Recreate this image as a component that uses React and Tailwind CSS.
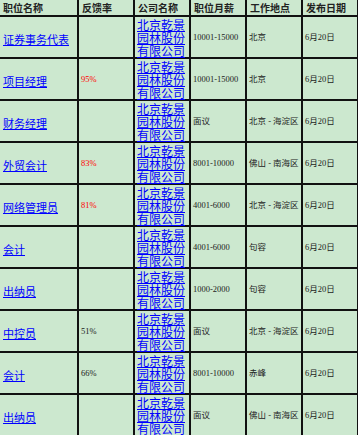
import React from 'react';

const COMPANY = '北京乾景园林股份有限公司';

const JOBS = [
  { title: '证券事务代表', rate: '', hot: false, pay: '10001-15000', place: '北京' },
  { title: '项目经理', rate: '95%', hot: true, pay: '10001-15000', place: '北京' },
  { title: '财务经理', rate: '', hot: false, pay: '面议', place: '北京 - 海淀区' },
  { title: '外贸会计', rate: '83%', hot: true, pay: '8001-10000', place: '佛山 - 南海区' },
  { title: '网络管理员', rate: '81%', hot: true, pay: '4001-6000', place: '北京 - 海淀区' },
  { title: '会计', rate: '', hot: false, pay: '4001-6000', place: '句容' },
  { title: '出纳员', rate: '', hot: false, pay: '1000-2000', place: '句容' },
  { title: '中控员', rate: '51%', hot: false, pay: '面议', place: '北京 - 海淀区' },
  { title: '会计', rate: '66%', hot: false, pay: '8001-10000', place: '赤峰' },
  { title: '出纳员', rate: '', hot: false, pay: '面议', place: '佛山 - 南海区' },
];

const HEADERS = ['职位名称', '反馈率', '公司名称', '职位月薪', '工作地点', '发布日期'];

const cell = 'border-r-2 border-b-2 border-[#111] p-0 align-middle';
const small = "text-[8.5px] leading-[10px] font-['Liberation_Serif','Noto_Sans_CJK_SC',serif] whitespace-nowrap text-[#222]";

export default function App() {
  return (
    <div className="w-[358px] h-[435px] overflow-hidden bg-[#cce8cf] font-['Noto_Sans_CJK_SC','Liberation_Sans',sans-serif] text-[#333]">
      <table className="border-collapse table-fixed w-[358px]">
        <colgroup>
          <col className="w-[78px]" />
          <col className="w-[56px]" />
          <col className="w-[56px]" />
          <col className="w-[56px]" />
          <col className="w-[56px]" />
          <col className="w-[56px]" />
        </colgroup>
        <thead>
          <tr className="h-[16px]">
            {HEADERS.map((h) => (
              <th key={h} className={`${cell} text-left font-bold text-[10px] leading-[14px] pl-[3px] text-[#222]`}>
                {h}
              </th>
            ))}
          </tr>
        </thead>
        <tbody>
          {JOBS.map((j, i) => (
            <tr key={i} className="h-[42px]">
              <td className={`${cell} pl-[3px]`}>
                <a href="#" className="text-[11px] leading-[14px] text-[#0000ff] underline">
                  {j.title}
                </a>
              </td>
              <td className={`${cell} pl-[2px] ${small} ${j.hot ? 'text-[#ff0000]' : ''}`}>
                {j.rate}
              </td>
              <td className={`${cell} pl-[2px]`}>
                <a href="#" className="block w-[50px] text-[12px] leading-[13px] text-[#0000ff] underline break-all">
                  {COMPANY}
                </a>
              </td>
              <td className={`${cell} pl-[2px] ${small}`}>{j.pay}</td>
              <td className={`${cell} pl-[2px] ${small}`}>{j.place}</td>
              <td className={`${cell} pl-[2px] ${small}`}>6月20日</td>
            </tr>
          ))}
        </tbody>
      </table>
    </div>
  );
}
